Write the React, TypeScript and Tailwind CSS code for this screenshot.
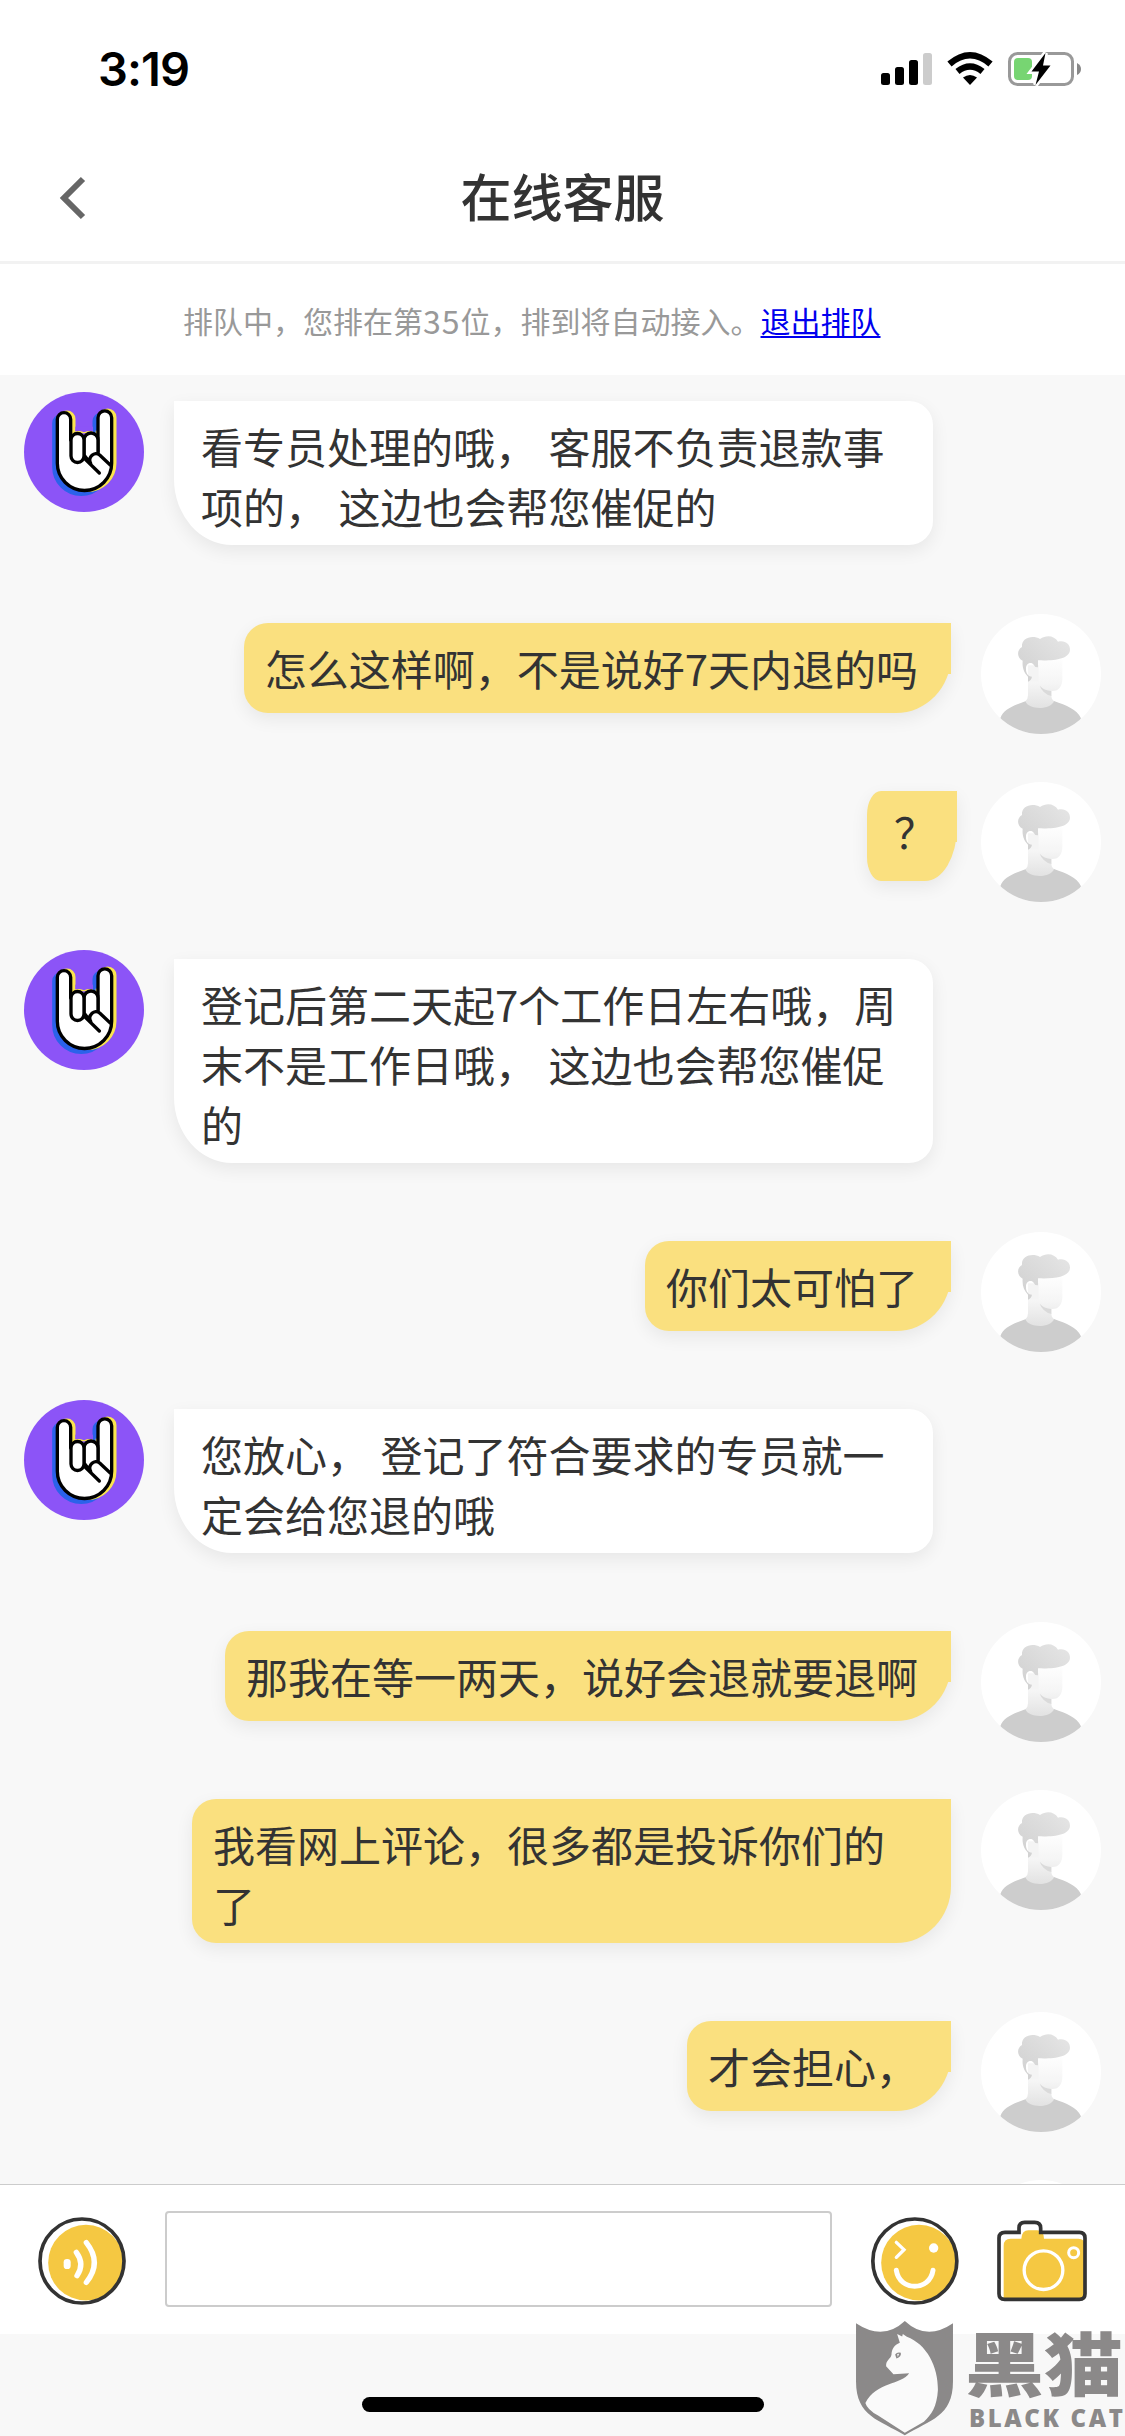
type Message = {
  from: 'agent' | 'user'
  lines: string[]
  compact?: boolean
}

const messages: Message[] = [
  { from: 'agent', lines: ['看专员处理的哦， 客服不负责退款事', '项的， 这边也会帮您催促的'] },
  { from: 'user', lines: ['怎么这样啊，不是说好7天内退的吗'] },
  { from: 'user', lines: ['？'], compact: true },
  { from: 'agent', lines: ['登记后第二天起7个工作日左右哦，周', '末不是工作日哦， 这边也会帮您催促', '的'] },
  { from: 'user', lines: ['你们太可怕了'] },
  { from: 'agent', lines: ['您放心， 登记了符合要求的专员就一', '定会给您退的哦'] },
  { from: 'user', lines: ['那我在等一两天，说好会退就要退啊'] },
  { from: 'user', lines: ['我看网上评论，很多都是投诉你们的', '了'] },
  { from: 'user', lines: ['才会担心，'] },
]

const HAND =
  'M142 118 A20 20 0 0 1 182 118 V165 Q200 150 222 165 Q242 150 263 165 V113 A20 20 0 0 1 305 113 V250 A81 81 0 0 1 142 250 Z'

function AgentAvatar() {
  return (
    <svg className="size-[120px] shrink-0" viewBox="42 36 360 360">
      <circle cx="222" cy="216" r="180" fill="#8c54f7" />
      <g strokeWidth="11" strokeLinejoin="round">
        <path d={HAND} fill="#2b62ea" stroke="#2b62ea" transform="translate(-10 11)" />
        <path d={HAND} fill="#fbe54e" stroke="#fbe54e" transform="translate(9 -1)" />
      </g>
      <path d="M196 140 H255 V165 H196Z" fill="#8c54f7" />
      <path d="M249 140 V165 H257 V118 Q249 124 249 140Z" fill="#2b62ea" />
      <path d="M187 160 Q200 147 222 157 Q244 147 254 160Z" fill="#fbe54e" />
      <g fill="#fff" stroke="#000" strokeWidth="10" strokeLinecap="round" strokeLinejoin="round">
        <path
          d="M142 118 A20 20 0 0 1 182 118 V200 H263 V113 A20.500 20.500 0 0 1 305 113 V250 A81.500 81.500 0 0 1 142 250 Z"
          stroke="none"
        />
        <path d="M182 180 V118 A20 20 0 0 0 142 118 V250 A81.500 81.500 0 0 0 305 250 V113 A20.500 20.500 0 0 0 264 113 V215" fill="none" />
        <path d="M222 180 A20 20 0 0 1 264 180 V238 H232 L222 225Z" />
        <path d="M183 180 A19.500 19.500 0 0 1 222 180 V228 A19.500 19.500 0 0 1 183 228Z" />
        <path d="M300 254 L269 225 C254 212 232 232 242 250" />
        <path d="M226 238 L268 279" fill="none" />
      </g>
    </svg>
  )
}

function UserAvatar() {
  return (
    <svg className="size-[120px] shrink-0" viewBox="63 41 360 360">
      <defs>
        <linearGradient id="hair" x1="1" y1="0" x2="0" y2="1">
          <stop offset="0" stopColor="#e6e6e6" />
          <stop offset="1" stopColor="#cfcfcf" />
        </linearGradient>
        <linearGradient id="skin" x1="0" y1="0" x2="0" y2="1">
          <stop offset="0" stopColor="#fefefe" />
          <stop offset="0.5" stopColor="#f5f5f5" />
          <stop offset="1" stopColor="#e2e2e2" />
        </linearGradient>
        <clipPath id="face">
          <circle cx="243" cy="221" r="180" />
        </clipPath>
      </defs>
      <circle cx="243" cy="221" r="180" fill="#fff" />
      <g clipPath="url(#face)">
        <path d="M121 354 C130 326 160 316 198 302 H282 C320 316 350 326 363 354 L340 401 H140Z" fill="#cdcdcd" />
        <path
          d="M204 230 L204 285 Q204 296 196 303 C206 330 273 330 282 302 Q274 297 274 284 V272 C296 274 307 258 307 236 V175 H234 V202Z"
          fill="url(#skin)"
        />
        <path d="M204 195 H236 V244 H204Z" fill="#f4f4f4" />
        <path d="M239 256 Q252 270 274 272 V287 Q248 280 239 256Z" fill="#dadada" />
        <path
          d="M188 181 C170 173 170 148 186 140 C183 112 218 103 240 116 C260 102 283 106 294 124 C314 118 331 131 330 149 C328 177 280 182 234 180 V201 Q225 202 221 193 C215 184 198 188 198 204 C197 218 204 229 216 229 C214 238 210 241 204 244 V229 C192 216 186 202 188 181Z"
          fill="url(#hair)"
        />
      </g>
    </svg>
  )
}

function Bubble({ message }: { message: Message }) {
  const text = message.lines.map((line) => (
    <p key={line} className="whitespace-pre [word-spacing:2px]">
      {line}
    </p>
  ))
  const shadow = 'shadow-[0_6px_18px_rgba(0,0,0,0.07)]'
  if (message.from === 'agent') {
    return (
      <div
        className={`mt-[9px] min-h-[90px] w-[759px] rounded-tr-[24px] rounded-br-[24px] rounded-bl-[58px_66px] bg-white pt-[15px] pb-[9px] pl-[27px] ${shadow}`}
      >
        {text}
      </div>
    )
  }
  if (message.compact) {
    return (
      <div
        className={`relative mt-[9px] mr-[24px] h-[90px] w-[90px] rounded-tl-[14px_24px] rounded-br-[32px_54px] rounded-bl-[14px_24px] bg-[#fae07f] pt-[10px] pl-[27px] ${shadow}`}
      >
        <i className="absolute top-0 right-0 h-[51px] w-6 bg-[#fae07f]" />
        <div className="relative">{text}</div>
      </div>
    )
  }
  return (
    <div
      className={`relative mt-[9px] mr-[30px] min-h-[90px] rounded-tl-[24px] rounded-br-[55px_57px] rounded-bl-[24px] bg-[#fae07f] pt-[15px] pb-[9px] pl-[21px] ${message.lines.length > 1 ? 'w-[759px]' : 'pr-[33px]'} ${shadow}`}
    >
      <i className="absolute top-0 right-0 h-[51px] w-6 bg-[#fae07f]" />
      {text}
    </div>
  )
}

function StatusBar() {
  return (
    <div className="flex h-[132px] shrink-0 items-start justify-between pl-[98px] pr-[43px]">
      <span className="mt-[39px] font-['Inter'] text-[47px] leading-[60px] font-semibold tracking-[-0.9px] text-black">3:19</span>
      <svg className="mt-[50px] h-[38px] w-[202px]" viewBox="880 50 202 38">
        <rect x="881" y="73" width="9" height="12" rx="2.500" />
        <rect x="895" y="67" width="9" height="18" rx="2.500" />
        <rect x="909" y="60" width="9" height="25" rx="2.500" />
        <rect x="923" y="53" width="9" height="32" rx="2.500" fill="#ccc" />
        <path d="M963 77.500 Q970 72.500 977 77.500 L970 85Z" />
        <path d="M957.500 71.500 Q970 61.500 982.500 71.500" fill="none" stroke="#000" strokeWidth="6.500" />
        <path d="M949.500 64 Q970 46.500 990.500 64" fill="none" stroke="#000" strokeWidth="6.500" />
        <rect x="1009.500" y="53.500" width="63" height="31" rx="8" fill="none" stroke="#999" strokeWidth="3" />
        <path d="M1077 63 Q1081 65 1081 69 T1077 75Z" fill="#888" />
        <rect x="1014" y="58" width="18" height="22" rx="4" fill="#77d572" />
        <path
          d="M1045.500 53 L1031.500 71.500 H1039 L1035.500 85 L1050.500 65.500 H1043Z"
          stroke="#fff"
          strokeWidth="5"
          paintOrder="stroke"
        />
      </svg>
    </div>
  )
}

function VoiceIcon() {
  return (
    <svg className="mt-[3px] size-[88px]" viewBox="116 174 264 264">
      <circle cx="260" cy="311" r="113.500" fill="#f5c842" />
      <circle cx="248" cy="306" r="126" fill="none" stroke="#333" strokeWidth="11" />
      <rect x="193" y="300" width="21" height="30" rx="10" fill="#fff" />
      <path d="M231 280 Q257 315 233 350 M261 251 Q309 311 261 370" fill="none" stroke="#fff" strokeWidth="16" strokeLinecap="round" />
    </svg>
  )
}

function SmileIcon() {
  return (
    <svg className="mt-[3px] size-[88px]" viewBox="274 174 264 264">
      <circle cx="418" cy="311" r="113.500" fill="#f5c842" />
      <circle cx="405.500" cy="306" r="126" fill="none" stroke="#333" strokeWidth="11" />
      <path d="M350 250 L373 272 L350 295" fill="none" stroke="#fff" strokeWidth="10" strokeLinecap="round" />
      <circle cx="462" cy="267" r="14" fill="#fff" />
      <path d="M350 334 C360 398 450 398 460 334" fill="none" stroke="#fff" strokeWidth="15" strokeLinecap="round" />
    </svg>
  )
}

function CameraIcon() {
  return (
    <svg className="mt-[2px] h-[82px] w-[90px]" viewBox="651 178 270 246">
      <path
        d="M671 255 Q671 234 692 234 H724 Q726 209 745 209 H772 Q791 209 792 234 H895 Q915 234 915 255 V416 H671Z"
        fill="#f5c842"
      />
      <path
        d="M675 215 H717 V202 Q717 185 734 185 H764 Q782 185 782 202 V215 H898 Q915 215 915 232 V399 Q915 416 898 416 H674 Q657 416 657 399 V232 Q657 215 675 215Z"
        fill="none"
        stroke="#333"
        strokeWidth="11"
      />
      <circle cx="790.500" cy="328.500" r="58" fill="none" stroke="#fff" strokeWidth="10" />
      <circle cx="881" cy="276" r="15" fill="none" stroke="#fff" strokeWidth="9" />
    </svg>
  )
}

function Watermark() {
  return (
    <div className="absolute bottom-0 left-[856px] flex gap-[12px] text-[#8b8989]">
      <svg className="h-[115px] w-[97px] shrink-0" viewBox="229 484 290 344">
        <path d="M229 491 Q310 545 375 484 Q440 545 519 491 V665 C519 770 450 780 375 826 C300 780 229 770 229 665Z" fill="#8b8989" />
        <path
          d="M257 729 C290 665 365 675 388 640 L341 643 L319 619 C318 600 333 598 335 585 C336 568 343 556 360 549 L352 523 L367 530 L369 523 L381 531 C440 553 475 620 474 690 C471 740 455 765 432 785 L375 818 L295 767 Q262 748 257 729Z"
          fill="#fafafa"
        />
        <path d="M346 584 Q352 576 363 579 Q365 592 350 596Z" fill="#8b8989" />
        <path d="M352 583 L358 582 L354 592Z" fill="#fafafa" />
      </svg>
      <div className="flex w-[160px] flex-col">
        <span className="h-[84px] origin-center scale-y-88 text-[79px] leading-[80px] font-black whitespace-nowrap">黑猫</span>
        <span className="mt-[1px] ml-[4px] font-['Open_Sans'] text-[24px] leading-[24px] font-extrabold tracking-[2.6px] whitespace-nowrap">
          BLACK CAT
        </span>
      </div>
    </div>
  )
}

export default function App() {
  return (
    <div className="relative flex h-[2436px] w-[1125px] flex-col overflow-hidden bg-white font-['Noto_Sans_CJK_SC',sans-serif] text-[#333]">
      <StatusBar />
      <header className="grid h-[132px] shrink-0 grid-cols-[1fr_auto_1fr] items-center border-b-[3px] border-[#f2f2f2] px-[58px]">
        <svg className="mt-[3px] h-[44px] w-[30px]" viewBox="0 0 30 44" fill="none" stroke="#666" strokeWidth="6">
          <path d="M25 3 L6 22 L25 41" />
        </svg>
        <h1 className="-mt-[3px] text-[51px] leading-[60px] font-medium">在线客服</h1>
      </header>
      <div className="flex h-[111px] shrink-0 items-center pl-[183px] text-[30px] leading-[40px] text-[#999]">
        <span>排队中，您排在第</span>
        <span className="text-[32px] tracking-[1px]">35</span>
        <span>位，排到将自动接入。</span>
        <a className="text-[#0000ee] underline decoration-2 underline-offset-[3px]">退出排队</a>
      </div>
      <main className="flex h-[1809px] shrink-0 flex-col overflow-hidden bg-[#f8f8f8] px-6 pt-[17px] text-[42px] leading-[60px]">
        {messages.map((message, i) => (
          <div
            key={i}
            className={
              message.from === 'agent'
                ? 'flex shrink-0 items-start gap-[30px] pb-[69px]'
                : message.lines.length > 1
                  ? 'flex h-[222px] shrink-0 items-start justify-end'
                  : 'flex h-[168px] shrink-0 items-start justify-end'
            }
          >
            {message.from === 'agent' && <AgentAvatar />}
            <Bubble message={message} />
            {message.from === 'user' && <UserAvatar />}
          </div>
        ))}
        <div className="flex shrink-0 justify-end">
          <UserAvatar />
        </div>
      </main>
      <footer className="flex h-[150px] shrink-0 items-center border-t border-[#ccc] bg-white pr-[38px] pl-[38px]">
        <VoiceIcon />
        <input className="-mt-[1px] mr-[39px] ml-[39px] h-[96px] w-[667px] rounded-[4px] border-2 border-[#ccc] bg-white" />
        <SmileIcon />
        <span className="ml-[38px]">
          <CameraIcon />
        </span>
      </footer>
      <div className="flex h-[102px] shrink-0 justify-center bg-[#f8f8f8] pt-[63px]">
        <div className="h-[15px] w-[402px] rounded-full bg-black" />
      </div>
      <Watermark />
    </div>
  )
}
